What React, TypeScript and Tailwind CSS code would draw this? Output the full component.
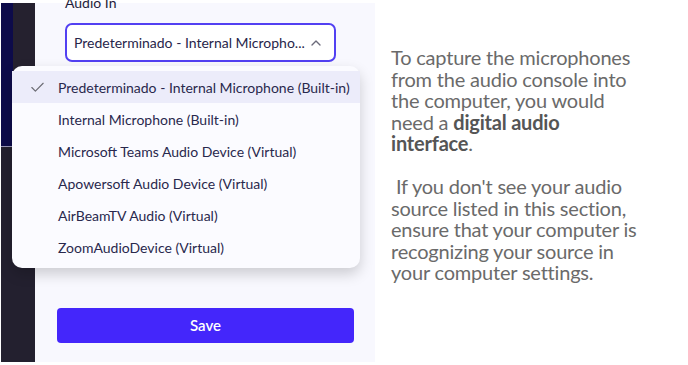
import { Check, ChevronUp } from "lucide-react";

const options = [
  "Predeterminado - Internal Microphone (Built-in)",
  "Internal Microphone (Built-in)",
  "Microsoft Teams Audio Device (Virtual)",
  "Apowersoft Audio Device (Virtual)",
  "AirBeamTV Audio (Virtual)",
  "ZoomAudioDevice (Virtual)",
];

export default function App() {
  return (
    <div className="w-[688px] h-[365px] bg-white flex py-[3px] overflow-hidden" style={{ fontFamily: "Lato, sans-serif" }}>
      {/* sidebar */}
      <div className="w-[35px] pl-px flex flex-col">
        <div className="h-[143px] flex">
          <div className="w-[12px] bg-[#0d0b4a]" />
          <div className="flex-1 bg-[#25212f]" />
        </div>
        <div className="h-px flex">
          <div className="w-[12px] bg-[#9a98b8]" />
          <div className="flex-1 bg-[#25212f]" />
        </div>
        <div className="flex-1 bg-[#23202f]" />
      </div>

      {/* settings panel */}
      <div className="w-[340px] bg-[#f8f8fe] relative pl-[30px] pr-[39px]">
        <div className="text-[14px] leading-[14px] text-[#1f1d3a] -mt-[7px]">Audio In</div>
        <div className="mt-[13px] h-[39px] bg-white border-2 border-[#5240f2] rounded-[7px] flex items-center pl-[7px] pr-[10px]">
          <span className="flex-1 text-[14px] text-[#27254a] whitespace-nowrap">Predeterminado - Internal Micropho...</span>
          <ChevronUp size={16} strokeWidth={2} className="text-[#6b6a7a]" />
        </div>

        <div className="absolute left-[-23px] top-[63px] w-[348px] bg-[#fbfbff] rounded-[10px] shadow-[0_6px_14px_rgba(0,0,0,0.18)] py-[5px]">
          {options.map((o, i) => (
            <div key={o} className={`h-[32px] flex items-center ${i === 0 ? "bg-[#ececfa]" : ""}`}>
              <div className="w-[46px] flex justify-end pr-[12px]">
                {i === 0 && <Check size={17} strokeWidth={1.6} className="text-[#6a6a72]" />}
              </div>
              <span className="text-[14px] text-[#29284d] whitespace-nowrap">{o}</span>
            </div>
          ))}
        </div>

        <button className="absolute left-[22px] top-[305px] w-[297px] h-[35px] rounded-[4px] bg-[#4426fb] text-white text-[15px] font-semibold">
          Save
        </button>
      </div>

      {/* help text */}
      <div className="pl-[16px] pt-[44px] w-[266px] text-[20px] leading-[21.5px] text-[#6a6a6a] tracking-[-0.2px]">
        <p>
          To capture the microphones from the audio console into the computer, you would need a{" "}
          <b className="text-[#555]">digital audio interface</b>.
        </p>
        <p className="mt-[21.5px]">
          &nbsp;If you don't see your audio source listed in this section, ensure that your computer is recognizing your source in your computer settings.
        </p>
      </div>
    </div>
  );
}
